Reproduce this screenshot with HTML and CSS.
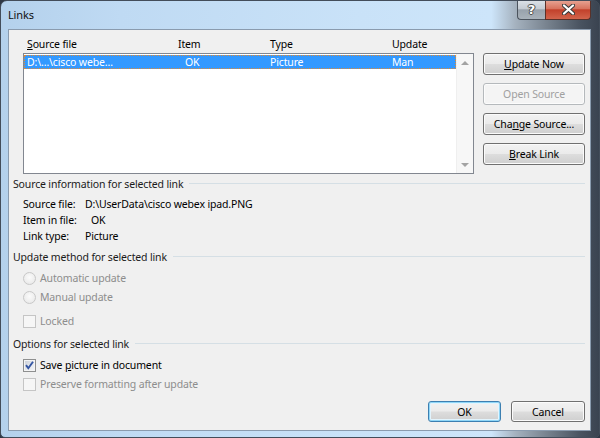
FILE: index.html
```html
<!DOCTYPE html>
<html>
<head>
<meta charset="utf-8">
<title>Links</title>
<link rel="stylesheet" href="styles.css">
</head>
<body>
<div class="window">
  <div class="titlebar">
    <span class="title">Links</span>
    <div class="caption">
      <div class="cap-btn help"><span class="help-glyph">?</span></div>
      <div class="cap-btn close">
        <svg width="13" height="11" viewBox="0 0 13 11"><path d="M2 1.5 L11 9.5 M11 1.5 L2 9.5" stroke="#3b3b3b" stroke-width="4.2" stroke-linecap="round"/><path d="M2 1.5 L11 9.5 M11 1.5 L2 9.5" stroke="#ffffff" stroke-width="2.2" stroke-linecap="round"/></svg>
      </div>
    </div>
  </div>
  <div class="client">
    <div class="top">
      <div class="listcol">
        <div class="cols head">
          <span><u>S</u>ource file</span><span>Item</span><span>Type</span><span>Update</span>
        </div>
        <div class="listbox">
          <div class="rows">
            <div class="cols row sel">
              <span>D:\…\cisco webe…</span><span class="okcell">OK</span><span>Picture</span><span>Man</span>
            </div>
          </div>
          <div class="vscroll">
            <div class="arrowbox"><span class="arrow up"></span></div>
            <div class="arrowbox"><span class="arrow down"></span></div>
          </div>
        </div>
      </div>
      <div class="btncol">
        <button class="btn side"><u>U</u>pdate Now</button>
        <button class="btn side" disabled>Open Source</button>
        <button class="btn side">Cha<u>n</u>ge Source...</button>
        <button class="btn side"><u>B</u>reak Link</button>
      </div>
    </div>

    <div class="sec sec1">Source information for selected link</div>
    <div class="info first"><span class="lbl">Source file:</span><span>D:\UserData\cisco webex ipad.PNG</span></div>
    <div class="info"><span class="lbl">Item in file:</span><span class="okval">OK</span></div>
    <div class="info"><span class="lbl">Link type:</span><span>Picture</span></div>

    <div class="sec sec2">Update method for selected link</div>
    <div class="opt dis r1"><span class="radio"></span><span>Automatic update</span></div>
    <div class="opt dis r2"><span class="radio"></span><span>Manual update</span></div>
    <div class="opt dis lock"><span class="check"></span><span>Locked</span></div>

    <div class="sec sec3">Options for selected link</div>
    <div class="opt save"><span class="check on"><svg width="11" height="11" viewBox="0 0 11 11"><path d="M2 5.2 L4.3 8.2 L9 1.8" fill="none" stroke="#3556a3" stroke-width="1.9"/></svg></span><span>Save <u>p</u>icture in document</span></div>
    <div class="opt dis pres"><span class="check"></span><span>Preserve formatting after update</span></div>

    <div class="footer">
      <button class="btn foot default">OK</button>
      <button class="btn foot cancel">Cancel</button>
    </div>
  </div>
</div>
</body>
</html>
```

FILE: styles.css
```css
* {
  box-sizing: border-box;
}

html, body {
  margin: 0;
  padding: 0;
}

body {
  width: 600px;
  height: 438px;
  overflow: hidden;
  background: #2f3845;
  font-family: "Noto Sans", "Open Sans", sans-serif;
  font-size: 10.5px;
  letter-spacing: -0.15px;
  color: #000;
}

.window {
  width: 600px;
  height: 438px;
  display: flex;
  flex-direction: column;
  border: 1px solid #434d5a;
  border-radius: 7px 7px 5px 5px;
  overflow: hidden;
  background: linear-gradient(90deg, #b4d1ec 0%, #bfdaf3 20%, #c9e2f8 60%, #cde5fa 82%, #a5b2bf 86%, #7a8591 91%, #48525f 97%, #3a4350 100%);
}

.titlebar {
  height: 28px;
  display: flex;
  align-items: flex-start;
  padding-left: 7px;
}

.title {
  margin-top: 7px;
  font-size: 11px;
  line-height: 14px;
  color: #101010;
}

.caption {
  display: flex;
  margin-left: auto;
  margin-right: 8px;
  margin-top: -1px;
}

.cap-btn {
  height: 20px;
  display: flex;
  align-items: center;
  justify-content: center;
  border: 1px solid #4b535d;
  border-top: none;
}

.help {
  width: 28px;
  border-right: none;
  border-radius: 0 0 0 4px;
  background: linear-gradient(#dde3e9 0%, #c5ccd3 45%, #98a2ac 52%, #a9b2ba 100%);
}

.help-glyph {
  font-family: "DejaVu Sans", sans-serif;
  font-weight: bold;
  font-size: 13px;
  line-height: 13px;
  color: #fff;
  letter-spacing: 0;
  text-shadow: 0 0 1px #333, 1px 0 0 #555, -1px 0 0 #555, 0 1px 0 #555, 0 -1px 0 #555;
}

.close {
  width: 46px;
  border-radius: 0 0 4px 0;
  border-color: #5a3129;
  background: linear-gradient(#e8a797 0%, #d7745f 45%, #c2412b 52%, #d2644c 100%);
}

.client {
  height: 402px;
  margin: 0 8px 6px 7px;
  border: 1px solid #8a9bae;
  background: #f0f0f0;
  display: flex;
  flex-direction: column;
  padding: 6px 5px 0 4px;
}

.top {
  display: flex;
  gap: 9px;
  margin-left: 10px;
}

.listcol {
  width: 451px;
}

.cols {
  display: grid;
  grid-template-columns: 151px 92px 122px 1fr;
  white-space: nowrap;
}

.head {
  height: 16px;
  line-height: 16px;
  padding-left: 4px;
}

.listbox {
  margin-top: 1px;
  height: 121px;
  border: 1px solid #828790;
  background: #fff;
  display: flex;
}

.rows {
  flex: 1;
  padding-top: 1px;
}

.row {
  height: 14px;
  line-height: 14px;
  padding-left: 3px;
}

.row.sel {
  background: #3399ff;
  color: #fff;
  outline: 1px dotted #e08a34;
  outline-offset: -1px;
}

.okcell {
  padding-left: 7px;
}

.vscroll {
  width: 17px;
  background: #f7f7f7;
  border-left: 1px solid #efefef;
  display: flex;
  flex-direction: column;
  justify-content: space-between;
}

.arrowbox {
  height: 17px;
  display: flex;
  align-items: center;
  justify-content: center;
}

.arrow {
  width: 0;
  height: 0;
  border-left: 4px solid transparent;
  border-right: 4px solid transparent;
}

.arrow.up {
  border-bottom: 4px solid #a3a3a3;
}

.arrow.down {
  border-top: 4px solid #a3a3a3;
}

.btncol {
  width: 102px;
  display: flex;
  flex-direction: column;
  gap: 8px;
  padding-top: 17px;
}

.btn {
  font: inherit;
  letter-spacing: inherit;
  color: #000;
  padding: 0;
  border: 1px solid #707070;
  border-radius: 3px;
  background: linear-gradient(#f2f2f2 0%, #ebebeb 48%, #dddddd 52%, #cfcfcf 100%);
  box-shadow: inset 0 0 0 1px #fbfbfb;
  text-align: center;
}

.btn.side {
  width: 102px;
  height: 22px;
}

.btn:disabled {
  color: #a0a0a0;
  border-color: #b5b9bc;
  background: #f4f4f4;
  box-shadow: inset 0 0 0 1px #fcfcfc;
}

.sec {
  display: flex;
  align-items: center;
  height: 16px;
  line-height: 16px;
  white-space: nowrap;
  color: #1a1a1a;
}

.sec::after {
  content: "";
  flex: 1;
  margin-left: 6px;
  margin-top: -1px;
  border-top: 1px solid #d5dfe5;
}

.sec1 {
  margin-top: 2px;
}

.sec2 {
  margin-top: 5px;
}

.sec3 {
  margin-top: 7px;
}

.info {
  display: flex;
  height: 16px;
  line-height: 16px;
  margin-left: 10px;
  white-space: nowrap;
}

.info.first {
  margin-top: 4px;
}

.lbl {
  width: 62px;
}

.okval {
  padding-left: 6px;
}

.opt {
  display: flex;
  align-items: center;
  gap: 4px;
  height: 16px;
  line-height: 16px;
  margin-left: 10px;
  white-space: nowrap;
}

.opt.dis {
  color: #8d8d8d;
}

.r1 { margin-top: 5px; }
.r2 { margin-top: 3px; }
.lock { margin-top: 8px; }
.save { margin-top: 5px; }
.pres { margin-top: 3px; }

.radio {
  width: 13px;
  height: 13px;
  border-radius: 50%;
  border: 1px solid #c8c8c8;
  background: radial-gradient(circle at 50% 40%, #fbfbfb 0%, #eeeeee 60%, #e2e2e2 100%);
}

.check {
  width: 13px;
  height: 13px;
  border: 1px solid #c5c5c5;
  background: #f6f6f6;
  display: flex;
  align-items: center;
  justify-content: center;
}

.check.on {
  border-color: #8e8f8f;
  background: linear-gradient(135deg, #c9ced6 0%, #e6e9ee 60%, #f4f5f7 100%);
  box-shadow: inset 0 0 0 1px #f4f4f4;
}

.footer {
  display: flex;
  justify-content: flex-end;
  gap: 10px;
  margin-top: 9px;
}

.btn.foot {
  width: 73px;
  height: 21px;
}

.btn.foot.cancel {
  width: 74px;
}

.btn.default {
  border-color: #3c7fb1;
  box-shadow: inset 0 0 0 1px #8fd6f7, inset 0 0 0 2px #e2f4fd;
}
```
